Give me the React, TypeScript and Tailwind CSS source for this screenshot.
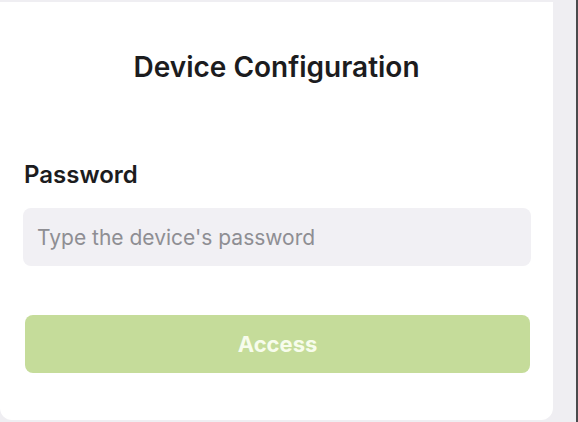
import React from 'react'

const App: React.FC = () => {
  return (
    <div className="flex h-[422px] w-[578px] bg-[#efeef2] font-['Inter','Liberation_Sans',sans-serif]">
      <div className="my-[2px] flex w-[553px] flex-col rounded-b-xl bg-white px-[23px] pt-[48px]">
        <h1 className="text-center text-[28px] font-semibold leading-[34px] text-[#1c1c1e]">
          Device Configuration
        </h1>

        <label className="mt-[77px] pl-[1px] text-[24px] font-semibold leading-[28px] text-[#1c1c1e]">
          Password
        </label>

        <input
          type="password"
          placeholder="Type the device's password"
          className="mt-[19px] h-[58px] w-[508px] rounded-lg bg-[#f1f0f4] px-[14px] text-[21px] text-[#1c1c1e] outline-none placeholder:text-[#8e8e93]"
        />

        <button
          disabled
          className="mt-[49px] ml-[2px] h-[58px] w-[505px] rounded-lg bg-[#c5dc9a] text-[22px] font-bold text-[#f7fcec]"
        >
          Access
        </button>
      </div>
      <div className="flex-1" />
      <div className="w-[2px] bg-[#4a4a4d]" />
    </div>
  )
}

export default App
